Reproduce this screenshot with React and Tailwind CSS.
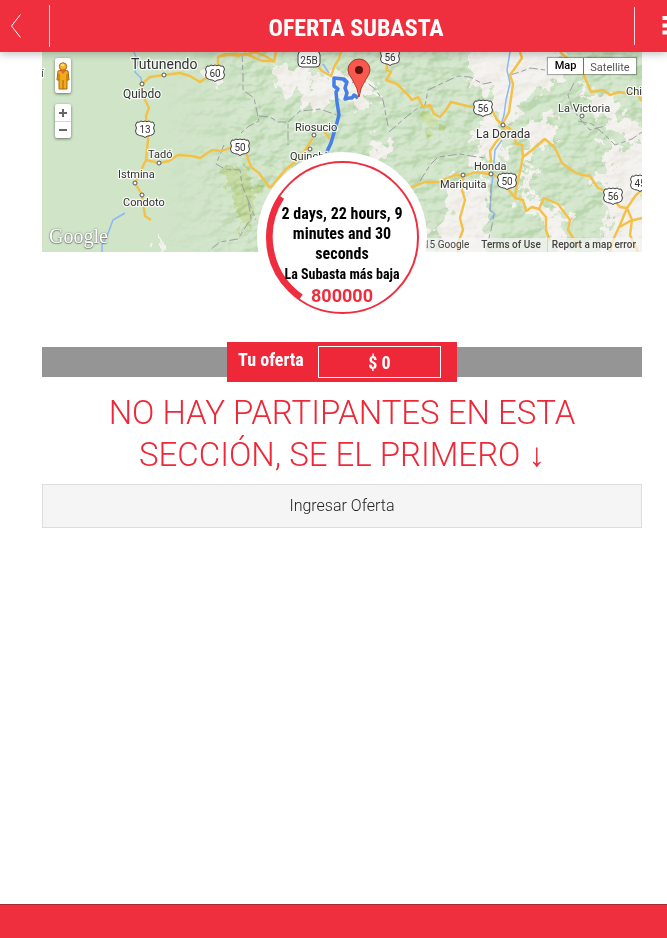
const SHIELD =
  "M-8 -7 q2 1 4 -1 q2 1.5 4 0 q2 1.5 4 0 q2 2 4 1 l1.5 3 q-2 3 0 6 q0 4 -4 4.5 q-4 .5 -5.500 2 q-1.500 -1.500 -5.500 -2 q-4 -.5 -4 -4.500 q2 -3 0 -6 z";

const SHIELDS = [
  [215, 73, "60"],
  [145, 129, "13"],
  [240, 147, "50"],
  [390, 57, "56"],
  [483, 108, "56"],
  [507, 181, "50"],
  [613, 196, "56"],
  [640, 183, "45"],
];

const PLACES = [
  [131, 69, "Tutunendo", 14],
  [123, 98, "Quibdo", 12],
  [148, 158, "Tadó", 11],
  [118, 178, "Istmina", 11],
  [123, 206, "Condoto", 11],
  [295, 131, "Riosucio", 11],
  [290, 160, "Quinchía", 11],
  [558, 112, "La Victoria", 11],
  [476, 138, "La Dorada", 12],
  [474, 170, "Honda", 11],
  [440, 188, "Mariquita", 11],
  [626, 95, "Chi", 11],
  [41, 77, "í", 11],
];

const TOWNS = [
  [164, 75],
  [142, 84],
  [159, 163],
  [135, 183],
  [142, 195],
  [314, 135],
  [310, 149],
  [582, 116],
  [503, 125],
  [491, 174],
  [463, 175],
];

const ROADS = [
  "M142 84 L150 77 164 75 172 74 180 73 190 76 200 82 206 78 215 73 218 64 218 57 230 54 245 55 255 52 265 56 275 62 M218 57 L225 54 240 56",
  "M244 53 L262 61 274 61 276 52",
  "M142 84 L143 96 149 108 146 116 148 140 146 160 135 183 142 195 145 216 151 220",
  "M146 160 L159 163 169 161 178 155 192 156 200 158 212 150 222 151 232 147 244 147 251 167 259 173 270 188",
  "M309 62 L315 63 322 71 331 76 335 65 339 59 341 52",
  "M270 188 L285 170 300 158 311 141 314 135 M323 130 L330 139",
  "M387 57 L387 70 391 72 386 80 397 84 408 95 412 100 418 97 423 107 430 105 434 114 440 117 446 110 451 102 467 106 483 108 492 110 497 120 503 125 511 129",
  "M503 125 L505 132 496 142 490 151 491 160 489 174 475 172 465 176 455 175 439 182 425 182 410 188",
  "M463 175 L462 190 465 200 460 218 463 230 458 243 458 252",
  "M520 52 L522 58 515 68 510 75 513 84 509 112 502 125",
  "M503 125 L514 132 516 144 522 145 523 157 516 190 515 198 508 189 505 180 491 174",
  "M523 157 L532 150 545 139 555 148 562 163 574 172 582 175 590 176 598 188 606 191 620 207 627 208",
  "M515 198 L523 200 526 211 532 207 539 209 544 198 558 204 570 220 568 230 580 248",
  "M539 209 L546 217 546 230 550 241",
  "M560 52 L568 59 583 73 591 92 603 90 610 95 619 92 625 93 636 92 642 101",
  "M627 208 L620 225 614 238 610 252 M627 208 L636 195 642 190 M618 228 L630 221 642 218 M627 208 L632 220 630 235 638 252",
  "M538 145 L544 139",
];

const BORDERS = [
  "M242 53 L243 76 243 90 254 98 257 112 259 121 249 126 241 133 M259 116 L270 117 278 122 288 122 288 145 M288 122 L300 111 320 109 342 117",
  "M224 145 L216 164 225 169 240 170 242 185 248 200 251 218 245 228 238 239 220 242 210 250 M248 200 L256 220",
  "M352 83 L360 78 374 88 383 100 388 126 M389 132 L405 118 415 110 425 105 428 90 445 82 458 76 470 77 483 84 493 82",
  "M420 181 L430 165 438 157 460 154 471 156 485 158 M491 184 L490 210 494 215 491 230 486 250",
  "M510 75 L520 72 530 68 545 70 M574 83 L568 95 572 108 580 119 590 130 605 126",
  "M578 121 L592 124 605 135 615 145 632 139 642 132",
];

const RIVERS = [
  "M134 52 L138 62 135 72 141 78 142 85",
  "M510 52 L507 70 510 83 506 100 504 115 501 125",
  "M502 140 L495 150 494 162 492 183 490 210 495 214 490 220",
  "M125 213 L113 220 107 236 102 245 102 252",
  "M323 64 L329 73",
];

const CLEARINGS = [
  "M275 65 L294 72 302 66 310 83 306 93 292 91 287 98 277 82z",
  "M303 62 L323 78 340 66 354 74 366 76 360 90 354 109 335 98 317 110 300 104 310 88z",
  "M350 95 L360 75 383 94 367 97 360 109 351 110z",
  "M370 144 L380 135 388 145 386 162 370 158z",
  "M472 44 L560 44 572 68 552 83 530 99 513 121 505 123 488 110 492 95 472 82z",
  "M484 113 L500 126 509 150 485 163 470 160 482 146 472 139z",
  "M442 178 L460 184 487 181 490 203 485 260 426 260 438 226 454 208z",
  "M530 120 L548 114 560 137 536 151 523 170 524 137z",
  "M600 145 L625 150 650 133 650 260 590 260 608 223 606 191 592 177 610 170z",
  "M525 172 L535 163 527 190 535 201 570 215 560 232 575 260 558 260 543 221 520 205z",
  "M575 80 L591 92 610 95 622 117 650 124 650 146 622 135 600 115z",
  "M207 72 L221 69 218 82 205 83z",
  "M159 235 L164 241 161 252 157 252z",
];

function Terrain() {
  return (
    <svg
      viewBox="42 52 600 200"
      preserveAspectRatio="xMidYMid slice"
      className="block h-full w-full font-[Roboto,sans-serif]"
      role="img"
      aria-label="Mapa"
    >
      <defs>
        <filter id="relief" x="0" y="0" width="100%" height="100%" colorInterpolationFilters="sRGB">
          <feTurbulence type="fractalNoise" baseFrequency="0.05 0.07" numOctaves="3" seed="8" />
          <feColorMatrix values="0 0 0 0 0  0 0 0 0 0  0 0 0 0 0  1 0 0 0 0" />
          <feDiffuseLighting surfaceScale="9" diffuseConstant="0.75" lightingColor="#fff">
            <feDistantLight azimuth="225" elevation="45" />
          </feDiffuseLighting>
        </filter>
        <filter id="ragged" x="-5%" y="-5%" width="110%" height="110%" colorInterpolationFilters="sRGB">
          <feTurbulence type="fractalNoise" baseFrequency="0.09" numOctaves="3" seed="3" result="n" />
          <feDisplacementMap in="SourceGraphic" in2="n" scale="32" xChannelSelector="R" yChannelSelector="G" />
        </filter>
        <linearGradient id="rise">
          <stop offset="0.2" stopColor="#000" />
          <stop offset="0.36" stopColor="#fff" />
        </linearGradient>
        <mask id="hills">
          <rect x="42" y="52" width="600" height="200" fill="url(#rise)" />
        </mask>
      </defs>
      <rect x="42" y="52" width="600" height="200" fill="#d0e4c8" />
      <g filter="url(#ragged)">
        {CLEARINGS.map((d) => (
          <path key={d} d={d} fill="#f3f1ed" />
        ))}
        <path d="M225 172 L240 160 252 178 258 190 250 212 245 232 238 222 238 205 225 190z" fill="#c4d9a1" />
        <path d="M420 115 L440 112 441 128 428 132z" fill="#c8dda4" />
      </g>
      <g mask="url(#hills)" opacity="0.6" className="mix-blend-soft-light">
        <rect x="42" y="52" width="600" height="200" filter="url(#relief)" />
      </g>
      <g fill="none" strokeLinejoin="round">
        {RIVERS.map((d) => (
          <path key={d} d={d} stroke="#8db8f3" strokeWidth="1.5" />
        ))}
        {BORDERS.map((d) => (
          <path key={d} d={d} stroke="#9b9fa0" strokeWidth="1" strokeDasharray="9 3 5 3" />
        ))}
        {ROADS.map((d) => (
          <path key={d} d={d} stroke="#f3c148" strokeWidth="2.4" />
        ))}
        <path
          d="M325 156 L331 143 336 126 339 115 337 102 336 92 338 89 334 86 334 78 343 79 345 81 344 79 347 82 345 88 347 93 345 99 349 98 352 98 354 95 358 98"
          stroke="#437fe6"
          strokeWidth="3.5"
        />
      </g>
      {TOWNS.map(([x, y]) => (
        <circle key={`${x}-${y}`} cx={x} cy={y} r="2" fill="#fff" stroke="#555" strokeWidth="1" />
      ))}
      <g fill="#333" stroke="#fff" strokeWidth="2.5" strokeLinejoin="round" strokeOpacity="0.8" className="[paint-order:stroke]">
        {PLACES.map(([x, y, name, size]) => (
          <text key={name} x={x} y={y} fontSize={size}>
            {name}
          </text>
        ))}
      </g>
      {SHIELDS.map(([x, y, n]) => (
        <g key={`${x}-${y}`} transform={`translate(${x} ${y})`}>
          <path d={SHIELD} fill="#fff" stroke="#444" strokeWidth="1" />
          <text y="4" textAnchor="middle" fontSize="10" fill="#333">
            {n}
          </text>
        </g>
      ))}
      <rect x="298" y="51" width="22" height="16" rx="4" fill="#fff" stroke="#444" />
      <text x="309" y="64" textAnchor="middle" fontSize="10" fill="#333">
        25B
      </text>
      <path
        d="M359 97 Q358 88 352 79 Q348 74 348 70 A11 11 0 0 1 370 70 Q370 74 366 79 Q360 88 359 97z"
        fill="#f8584e"
        stroke="#a83a34"
        strokeWidth="1"
      />
      <circle cx="359" cy="70" r="4" fill="#5c120e" />
    </svg>
  );
}

function Pegman() {
  return (
    <svg viewBox="0 0 14 28" className="h-7 w-3.5" aria-hidden="true">
      <path d="M2 9 Q7 7 12 9 L13 18 H11 V27 H3 V18 H1z" fill="#f3ab19" stroke="#a8680e" />
      <path d="M7 18 V27 M3 12 V18 M11 12 V18" stroke="#a8680e" />
      <path d="M4 8.500 H10 L7 12z" fill="#ef5a5a" />
      <circle cx="7" cy="4.500" r="3.700" fill="#f5b324" stroke="#a8680e" />
      <ellipse cx="6.500" cy="3" rx="2" ry="1.200" fill="#fbdc8a" />
    </svg>
  );
}

function RouteMap() {
  return (
    <section className="relative h-[200px] overflow-hidden">
      <Terrain />
      <button
        aria-label="Street View"
        className="absolute left-[13px] top-1.5 flex h-[35px] w-4 items-center justify-center rounded-xs bg-white shadow-[0_1px_3px_rgba(0,0,0,0.5)]"
      >
        <Pegman />
      </button>
      <div className="absolute left-[13px] top-[52px] flex w-4 flex-col divide-y divide-gray-300 rounded-xs bg-white shadow-[0_1px_3px_rgba(0,0,0,0.5)]">
        <button aria-label="Acercar" className="flex h-[18px] items-center justify-center">
          <svg viewBox="0 0 8 8" className="size-2" stroke="#666" strokeWidth="2">
            <path d="M0 4 H8 M4 0 V8" />
          </svg>
        </button>
        <button aria-label="Alejar" className="flex h-4 items-center justify-center">
          <svg viewBox="0 0 8 8" className="size-2" stroke="#666" strokeWidth="2">
            <path d="M0 4 H8" />
          </svg>
        </button>
      </div>
      <div className="absolute right-1.5 top-1.5 flex h-4 divide-x divide-gray-500 bg-white text-[11px] leading-4 shadow-[0_0_1px_1px_rgba(0,0,0,0.3)]">
        <button className="w-9 font-medium text-black">Map</button>
        <button className="w-[52px] pt-1 leading-3 text-[#565656]">Satellite</button>
      </div>
      <span className="absolute bottom-1 left-[7px] font-[Liberation_Serif,serif] text-[20px] leading-6 text-white [text-shadow:0_0_2px_#666,0_1px_1px_#888]">
        Google
      </span>
      <div className="absolute bottom-0 right-0 flex h-3.5 w-[230px] justify-end bg-[#f5f5f5]/70 pr-1.5 text-[10px] leading-3.5 text-[#444]">
        <span className="pr-3">2015 Google</span>
        <a href="#terms" className="border-r border-gray-300 pr-1.5 font-medium">
          Terms of Use
        </a>
        <a href="#report" className="pl-1 font-medium">
          Report a map error
        </a>
      </div>
    </section>
  );
}

function Countdown() {
  return (
    <section className="relative mx-auto -mt-[100px] size-[170px] rounded-full bg-white px-6 pt-[52px] text-center font-['Roboto_Condensed',Roboto,sans-serif] font-bold text-black">
      <svg viewBox="0 0 170 170" fill="none" stroke="#ee2e3e" className="absolute inset-0 size-full" aria-hidden="true">
        <circle cx="85.500" cy="85.500" r="75.500" strokeWidth="2" />
        <path d="M24.500 45 A73.500 73.500 0 0 0 44 145" strokeWidth="6" />
      </svg>
      <p className="relative text-base leading-5">2 days, 22 hours, 9 minutes and 30 seconds</p>
      <p className="relative text-sm leading-5 whitespace-nowrap">La Subasta más baja</p>
      <p className="relative font-[Roboto,sans-serif] text-lg leading-6 text-[#ee2e3e]">800000</p>
    </section>
  );
}

export default function App() {
  return (
    <div className="flex min-h-screen flex-col bg-white font-[Roboto,sans-serif]">
      <header className="relative z-10 flex h-[52px] items-center bg-[#ef2f3e] text-white shadow-[0_2px_8px_rgba(0,0,0,0.25)]">
        <button aria-label="Volver" className="h-[42px] w-[50px] border-r border-white/80 pl-[11px]">
          <svg viewBox="0 0 10 24" className="h-6 w-2.5" fill="none" stroke="#fff">
            <path d="M9.500 0.500 L0.500 12 L9.500 23.500" />
          </svg>
        </button>
        <h1 className="flex-1 pl-7 pt-1 text-center font-['Roboto_Condensed',Roboto,sans-serif] text-2xl leading-8 font-bold">
          OFERTA SUBASTA
        </h1>
        <button aria-label="Menú" className="flex h-[38px] w-[33px] items-center justify-end overflow-hidden border-l border-white/80">
          <svg viewBox="0 0 5 20" className="h-5 w-[5px]" fill="#fff">
            <path d="M0.500 0h4.500v4H0.500z M0.500 7.500h4.500v4H0.500z M0.500 14.500h4.500v4H0.500z" />
          </svg>
        </button>
      </header>

      <main className="ml-[42px] mr-[25px] flex-1">
        <RouteMap />
        <Countdown />
        <div className="mt-[25px] flex h-[30px] items-center justify-center bg-[#959595]">
          <div className="flex h-10 w-[230px] shrink-0 items-center justify-between bg-[#ee2838] pl-[11px] pr-4 font-['Roboto_Condensed',Roboto,sans-serif] font-bold text-white">
            <label htmlFor="oferta" className="pb-1 text-lg leading-5">
              Tu oferta
            </label>
            <input
              id="oferta"
              defaultValue="$ 0"
              className="h-8 w-[123px] border border-white bg-transparent text-center text-lg leading-5 outline-none"
            />
          </div>
        </div>
        <h2 className="mt-[15px] px-12 text-center text-[33px] leading-[42px] font-light text-[#ee2838]">
          NO HAY PARTIPANTES EN ESTA SECCIÓN, SE EL PRIMERO{" "}
          <span className="font-[Liberation_Serif,serif]">↓</span>
        </h2>
        <button className="mt-2 h-11 w-full border border-[#ddd] bg-[#f5f5f5] text-base font-light text-[#222]">
          Ingresar Oferta
        </button>
      </main>

      <footer className="h-[34px] border-t border-[#a52a35] bg-[#ef2f3e]" />
    </div>
  );
}
